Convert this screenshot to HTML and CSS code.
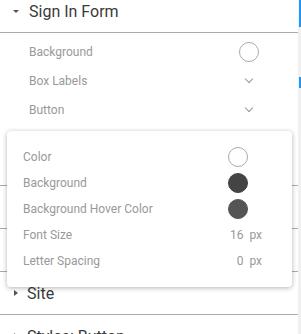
FILE: index.html
```html
<!DOCTYPE html>
<html lang="en">
<head>
    <meta charset="UTF-8">
    <meta name="viewport" content="width=device-width, initial-scale=1.0">
    <title>Form Styles</title>
    <link rel="stylesheet" href="styles.css">
</head>
<body>

    <div class="sidebar">
        <div class="panel">
            <div class="section">
                <div class="section-head first">
                    <span class="caret down"></span>
                    <span class="section-title">Sign In Form</span>
                </div>
                <div class="section-body">
                    <div class="row">
                        <span class="label">Background</span>
                        <span class="swatch white"></span>
                    </div>
                    <div class="row">
                        <span class="label">Box Labels</span>
                        <span class="chevron"></span>
                    </div>
                    <div class="row">
                        <span class="label">Button</span>
                        <span class="chevron"></span>
                    </div>
                </div>
            </div>

            <div class="section">
                <div class="section-head">
                    <span class="caret right"></span>
                    <span class="section-title">Sign Up Form</span>
                </div>
            </div>

            <div class="section">
                <div class="section-head">
                    <span class="caret right"></span>
                    <span class="section-title">Header</span>
                </div>
            </div>

            <div class="section">
                <div class="section-head">
                    <span class="caret right"></span>
                    <span class="section-title">Footer</span>
                </div>
            </div>

            <div class="section">
                <div class="section-head">
                    <span class="caret right"></span>
                    <span class="section-title">Site</span>
                </div>
            </div>

            <div class="section">
                <div class="section-head">
                    <span class="caret right"></span>
                    <span class="section-title">Styles: Button</span>
                </div>
            </div>
        </div>

        <div class="scrollbar">
            <div class="thumb top"></div>
            <div class="thumb mid"></div>
        </div>

        <!-- popup for Button -->
        <div class="popup">
            <div class="popup-row">
                <span class="label">Color</span>
                <span class="swatch white"></span>
            </div>
            <div class="popup-row">
                <span class="label">Background</span>
                <span class="swatch dark"></span>
            </div>
            <div class="popup-row">
                <span class="label">Background Hover Color</span>
                <span class="swatch hover"></span>
            </div>
            <div class="popup-row">
                <span class="label">Font Size</span>
                <span class="value">16</span>
                <span class="unit">px</span>
            </div>
            <div class="popup-row">
                <span class="label">Letter Spacing</span>
                <span class="value">0</span>
                <span class="unit">px</span>
            </div>
        </div>
    </div>

</body>
</html>
```

FILE: styles.css
```css
body {
    margin: 0;
    font-family: Roboto, "Liberation Sans", sans-serif;
    background-color: white;
    overflow: hidden;
    height: 334px;
}
.sidebar {
    position: relative;
    display: flex;
    width: 301px;
    height: 334px;
}
.panel {
    flex: 1;
    margin-top: -10px;
}
.section-head {
    display: flex;
    align-items: center;
    height: 42px;
    border-bottom: 1px solid #aaa;
    padding-left: 13px;
}
.section-title {
    font-size: 16px;
    color: #3a3a3a;
    margin-left: 10px;
}
.caret {
    width: 0;
    height: 0;
}
.caret.down {
    border-left: 3px solid transparent;
    border-right: 3px solid transparent;
    border-top: 3px solid #555;
}
.caret.right {
    border-top: 3px solid transparent;
    border-bottom: 3px solid transparent;
    border-left: 4px solid #555;
    margin-left: 1px;
    margin-right: -1px;
}
.section-body {
    padding: 4px 39px 19px 29px;
}
.row {
    display: flex;
    align-items: center;
    justify-content: space-between;
    height: 29px;
}
.label {
    font-size: 12px;
    color: #999;
}
.swatch {
    width: 18px;
    height: 18px;
    border-radius: 50%;
    border: 1px solid #aaa;
    box-sizing: content-box;
}
.swatch.white {
    background-color: white;
}
.swatch.dark {
    background-color: #444;
    border-color: #444;
}
.swatch.hover {
    background-color: #555;
    border-color: #555;
}
.chevron {
    width: 5px;
    height: 5px;
    border-right: 1.5px solid #999;
    border-bottom: 1.5px solid #999;
    transform: rotate(45deg);
    margin-right: 7px;
    margin-top: -4px;
}
.scrollbar {
    position: relative;
    width: 3px;
    background-color: #f0f0f0;
}
.thumb {
    position: absolute;
    right: 0;
    width: 2px;
    background-color: #2196f3;
}
.thumb.top {
    top: 0;
    height: 27px;
}
.thumb.mid {
    top: 77px;
    height: 11px;
}
.popup {
    position: absolute;
    left: 7px;
    top: 131px;
    width: 285px;
    box-sizing: border-box;
    padding: 13px 30px 13px 16px;
    background-color: white;
    border-radius: 4px;
    box-shadow: 0 1px 5px rgba(0,0,0,0.3);
}
.popup-row {
    display: flex;
    align-items: center;
    height: 26px;
}
.popup-row .label {
    flex: 1;
}
.popup-row .swatch {
    margin-right: 14px;
}
.value {
    font-size: 12px;
    color: #999;
}
.unit {
    font-size: 12px;
    color: #999;
    margin-left: 6px;
}
```
